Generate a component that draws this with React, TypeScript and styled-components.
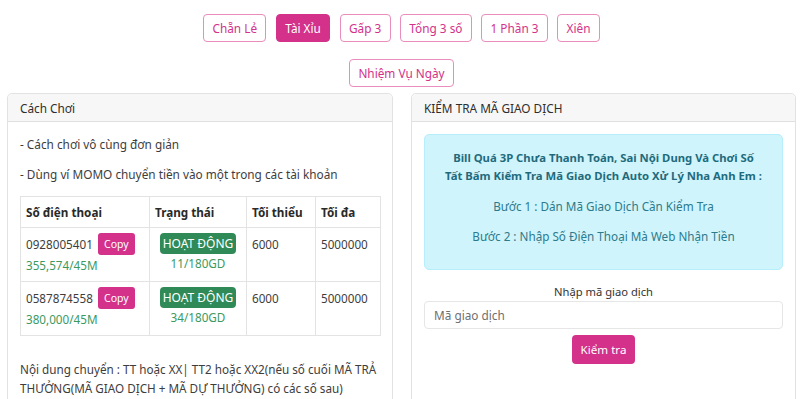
import React from "react";
import styled, { createGlobalStyle, css } from "styled-components";

const GlobalStyle = createGlobalStyle`
  html, body { margin: 0; padding: 0; background: #fff; }
  body {
    font-family: "Noto Sans", "Open Sans", sans-serif;
    font-size: 11.7px;
    color: #3d3d3d;
  }
  * { box-sizing: border-box; }
`;

const PINK = "#d3318a";

const Page = styled.div`
  padding: 14px 4px 0 7px;
`;

const Nav = styled.div`
  display: flex;
  flex-direction: column;
  align-items: center;
  gap: 17px;
`;

const NavRow = styled.div`
  display: flex;
  justify-content: center;
  gap: 9.5px;
`;

const NavButton = styled.button<{ $active?: boolean }>`
  height: 28px;
  padding: 0 8.3px;
  border-radius: 4px;
  font-family: inherit;
  font-size: 11.8px;
  border: 1px solid #e98dbd;
  background: #fff;
  color: ${PINK};
  cursor: pointer;
  ${(p) =>
    p.$active &&
    css`
      background: ${PINK};
      border-color: ${PINK};
      color: #fff;
    `}
`;

const Columns = styled.div`
  display: grid;
  grid-template-columns: 386px 385px;
  column-gap: 18px;
  margin-top: 6px;
  align-items: start;
`;

const Card = styled.section`
  border: 1px solid #e2e2e2;
  border-radius: 5px;
  background: #fff;
  min-height: 330px;
`;

const CardHeader = styled.div`
  height: 28px;
  display: flex;
  align-items: center;
  padding: 0 12px;
  background: #f7f7f7;
  border-bottom: 1px solid #e0e0e0;
  border-radius: 5px 5px 0 0;
  color: #2e2e2e;
  font-size: 11.8px;
`;

const CardBody = styled.div`
  padding: 12px;
`;

const Para = styled.p`
  margin: 0 0 10px;
  line-height: 20px;
  font-size: 11.8px;
`;

const Table = styled.table`
  width: 360px;
  table-layout: fixed;
  border-collapse: collapse;
  margin-top: 12px;
  border: 1px solid #e3e3e3;
  th, td {
    border: 1px solid #e3e3e3;
    padding: 5px 5px;
    vertical-align: top;
    text-align: left;
  }
  th {
    font-weight: 700;
    height: 31px;
    padding-top: 0;
    padding-bottom: 0;
    color: #2a2a2a;
    vertical-align: middle;
    white-space: nowrap;
  }
  td { height: 54px; line-height: 22px; }
`;

const PhoneLine = styled.div`
  display: flex;
  align-items: center;
  gap: 5px;
  height: 22px;
`;

const CopyButton = styled.button`
  height: 22px;
  width: 37px;
  padding: 0;
  border: none;
  border-radius: 3px;
  background: ${PINK};
  color: #fff;
  font-family: inherit;
  font-size: 10.5px;
`;

const GreenText = styled.div<{ $tight?: boolean }>`
  color: #3a9a5f;
  line-height: ${(p) => (p.$tight ? "18px" : "20px")};
`;

const StatusCell = styled.td`
  && { text-align: center; padding-top: 4px; }
`;

const Badge = styled.span`
  display: inline-block;
  background: #2f8a57;
  color: #fff;
  border-radius: 4px;
  padding: 0 3px;
  height: 21px;
  line-height: 21px;
  font-size: 12px;
  white-space: nowrap;
`;

const Note = styled.p`
  margin: 24px 0 0;
  line-height: 19px;
`;

const Alert = styled.div`
  background: #cff4fc;
  border: 1px solid #b6effb;
  border-radius: 5px;
  padding: 14px 8px 12px;
  text-align: center;
  color: #2d7a8b;
`;

const AlertTitle = styled.p`
  margin: 0 0 12px;
  font-weight: 700;
  font-size: 11.3px;
  line-height: 18px;
  color: #1f6b7c;
`;

const AlertStep = styled.p`
  margin: 0 0 12px;
  line-height: 18px;
`;

const Form = styled.div`
  display: flex;
  flex-direction: column;
  align-items: center;
  margin-top: 13px;
`;

const Label = styled.label`
  line-height: 18px;
  color: #333;
  font-size: 11.2px;
`;

const Input = styled.input`
  width: 100%;
  height: 28px;
  border: 1px solid #e6e6e6;
  border-radius: 4px;
  padding: 0 9px;
  font-family: inherit;
  font-size: 11.8px;
  &::placeholder { color: #6f6f6f; }
`;

const SubmitButton = styled.button`
  margin-top: 6px;
  height: 29px;
  padding: 0 9px;
  border: none;
  border-radius: 4px;
  background: ${PINK};
  color: #fff;
  font-family: inherit;
  font-size: 11.6px;
`;

const tabs = ["Chẵn Lẻ", "Tài Xỉu", "Gấp 3", "Tổng 3 số", "1 Phần 3", "Xiên"];

const rows = [
  { phone: "0928005401", money: "355,574/45M", count: "11/180GD" },
  { phone: "0587874558", money: "380,000/45M", count: "34/180GD" },
];

export default function App() {
  return (
    <>
      <GlobalStyle />
      <Page>
        <Nav>
          <NavRow>
            {tabs.map((t) => (
              <NavButton key={t} $active={t === "Tài Xỉu"}>
                {t}
              </NavButton>
            ))}
          </NavRow>
          <NavRow>
            <NavButton>Nhiệm Vụ Ngày</NavButton>
          </NavRow>
        </Nav>
        <Columns>
          <Card>
            <CardHeader>Cách Chơi</CardHeader>
            <CardBody>
              <Para>- Cách chơi vô cùng đơn giản</Para>
              <Para>- Dùng ví MOMO chuyển tiền vào một trong các tài khoản</Para>
              <Table>
                <colgroup>
                  <col style={{ width: 129 }} />
                  <col style={{ width: 97 }} />
                  <col style={{ width: 69 }} />
                  <col style={{ width: 65 }} />
                </colgroup>
                <thead>
                  <tr>
                    <th>Số điện thoại</th>
                    <th>Trạng thái</th>
                    <th>Tối thiểu</th>
                    <th>Tối đa</th>
                  </tr>
                </thead>
                <tbody>
                  {rows.map((r) => (
                    <tr key={r.phone}>
                      <td>
                        <PhoneLine>
                          {r.phone}
                          <CopyButton>Copy</CopyButton>
                        </PhoneLine>
                        <GreenText>{r.money}</GreenText>
                      </td>
                      <StatusCell>
                        <Badge>HOẠT ĐỘNG</Badge>
                        <GreenText $tight>{r.count}</GreenText>
                      </StatusCell>
                      <td>6000</td>
                      <td>5000000</td>
                    </tr>
                  ))}
                </tbody>
              </Table>
              <Note>
                Nội dung chuyển : TT hoặc XX| TT2 hoặc XX2(nếu số cuối MÃ TRẢ
                THƯỞNG(MÃ GIAO DỊCH + MÃ DỰ THƯỞNG) có các số sau)
              </Note>
            </CardBody>
          </Card>
          <Card>
            <CardHeader>KIỂM TRA MÃ GIAO DỊCH</CardHeader>
            <CardBody>
              <Alert>
                <AlertTitle>
                  Bill Quá 3P Chưa Thanh Toán, Sai Nội Dung Và Chơi Số
                  <br />
                  Tất Bấm Kiểm Tra Mã Giao Dịch Auto Xử Lý Nha Anh Em :
                </AlertTitle>
                <AlertStep>Bước 1 : Dán Mã Giao Dịch Cần Kiểm Tra</AlertStep>
                <AlertStep>Bước 2 : Nhập Số Điện Thoại Mà Web Nhận Tiền</AlertStep>
              </Alert>
              <Form>
                <Label>Nhập mã giao dịch</Label>
                <Input placeholder="Mã giao dịch" />
                <SubmitButton>Kiểm tra</SubmitButton>
              </Form>
            </CardBody>
          </Card>
        </Columns>
      </Page>
    </>
  );
}
